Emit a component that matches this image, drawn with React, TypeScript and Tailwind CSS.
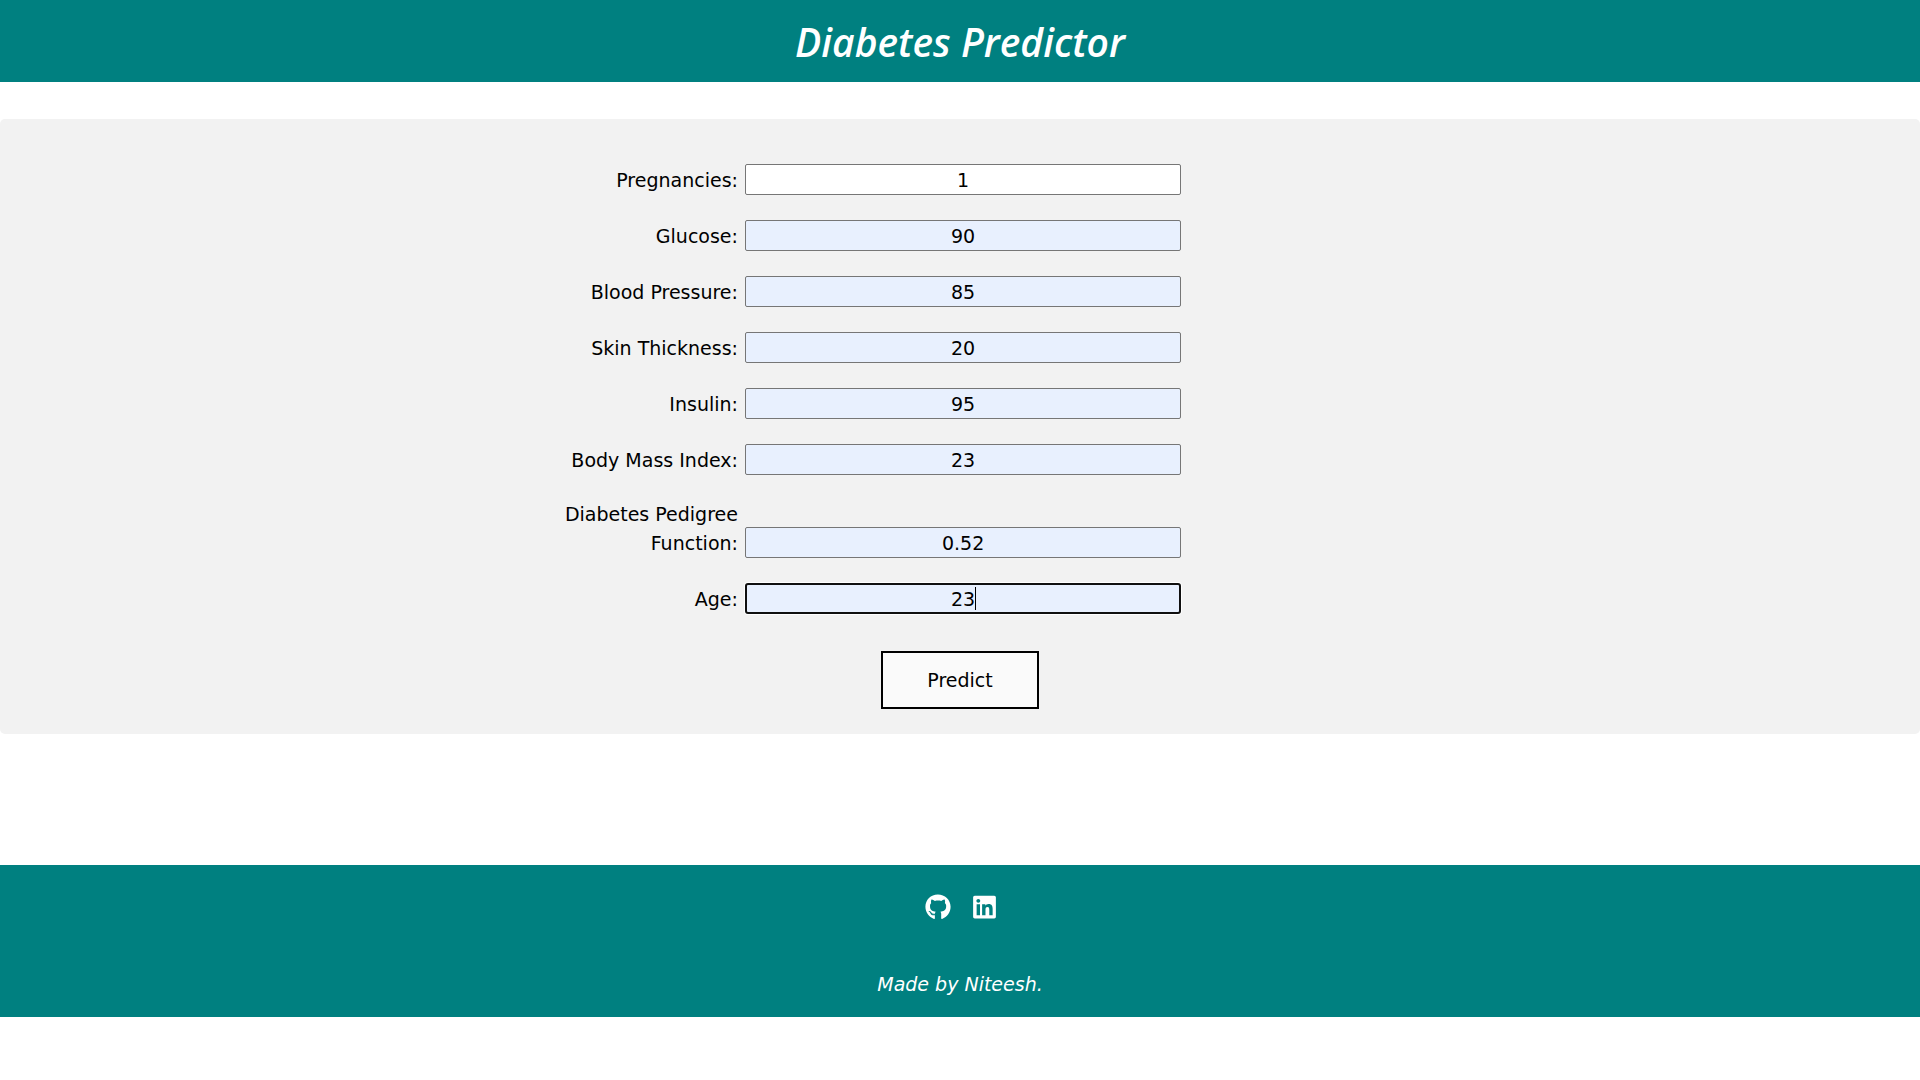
import React from "react";

type Field = { id: string; label: string; value: string; filled: boolean; active?: boolean };

const fields: Field[] = [
  { id: "pregnancies", label: "Pregnancies:", value: "1", filled: false },
  { id: "glucose", label: "Glucose:", value: "90", filled: true },
  { id: "blood-pressure", label: "Blood Pressure:", value: "85", filled: true },
  { id: "skin-thickness", label: "Skin Thickness:", value: "20", filled: true },
  { id: "insulin", label: "Insulin:", value: "95", filled: true },
  { id: "bmi", label: "Body Mass Index:", value: "23", filled: true },
  { id: "pedigree", label: "Diabetes Pedigree Function:", value: "0.52", filled: true },
  { id: "age", label: "Age:", value: "23", filled: true, active: true },
];

function FieldRow({ field }: { field: Field }) {
  const border = field.active
    ? "border-2 border-[#101010] rounded-[3px] ring-1 ring-white"
    : "border border-[#767676] rounded-[2px]";
  return (
    <div className="flex items-end gap-[7px] pl-[27.4%]">
      <label htmlFor={field.id} className="w-[15.2%] text-right leading-[29px]">
        {field.label}
      </label>
      <div className="relative w-[31.3%]">
        <input
          id={field.id}
          type="text"
          defaultValue={field.value}
          className={`block h-[31px] w-full text-center text-black outline-none ${border} ${
            field.filled ? "bg-[#e8f0fe]" : "bg-white"
          }`}
        />
        {field.active && <span className="absolute left-1/2 top-1 ml-3 h-[23px] w-px bg-black" />}
      </div>
    </div>
  );
}

export default function App() {
  return (
    <div className="min-h-screen bg-white font-['Verdana','DejaVu_Sans',sans-serif] text-[19px] text-black">
      <header className="bg-[#008080] pb-[15px] pt-[17px] text-center text-white">
        <h1 className="font-['Comic_Sans_MS','Open_Sans',cursive] text-[39px] font-semibold italic leading-[50px]">
          Diabetes Predictor
        </h1>
      </header>

      <main className="mt-[37px] rounded-[5px] bg-[#f2f2f2] pb-[25px] pt-[45px]">
        <form onSubmit={(e) => e.preventDefault()}>
          <div className="flex flex-col gap-[25px]">
            {fields.map((f) => (
              <FieldRow key={f.id} field={f} />
            ))}
          </div>
          <div className="mt-[37px] flex justify-center">
            <button type="submit" className="h-[58px] border-2 border-black bg-[#fafafa] px-11">
              Predict
            </button>
          </div>
        </form>
      </main>

      <footer className="mt-[131px] bg-[#008080] pb-[18px] pt-[29px] text-center text-white">
        <nav className="flex justify-center gap-[22px]">
          <a href="#github" aria-label="GitHub">
            <svg className="size-[26px]" viewBox="0 0 496 512" fill="currentColor">
              <path d="M165.9 397.4c0 2-2.3 3.6-5.2 3.6-3.3.3-5.6-1.3-5.6-3.6 0-2 2.3-3.6 5.2-3.6 3-.3 5.6 1.3 5.6 3.6zm-31.1-4.5c-.7 2 1.3 4.3 4.3 4.9 2.6 1 5.6 0 6.2-2s-1.3-4.3-4.3-5.2c-2.6-.7-5.5.3-6.2 2.3zm44.2-1.7c-2.9.7-4.9 2.6-4.6 4.9.3 2 2.9 3.3 5.9 2.6 2.9-.7 4.9-2.6 4.6-4.6-.3-1.9-3-3.2-5.9-2.9zM244.8 8C106.1 8 0 113.3 0 252c0 110.9 69.8 205.8 169.5 239.2 12.8 2.3 17.3-5.6 17.3-12.1 0-6.2-.3-40.4-.3-61.4 0 0-70 15-84.7-29.8 0 0-11.4-29.1-27.8-36.6 0 0-22.9-15.7 1.6-15.4 0 0 24.9 2 38.6 25.8 21.9 38.6 58.6 27.5 72.9 20.9 2.3-16 8.8-27.1 16-33.7-55.9-6.2-112.3-14.3-112.3-110.5 0-27.5 7.6-41.3 23.6-58.9-2.6-6.5-11.1-33.3 2.6-67.9 20.9-6.5 69 27 69 27 20-5.6 41.5-8.5 62.8-8.5s42.8 2.9 62.8 8.5c0 0 48.1-33.6 69-27 13.7 34.7 5.2 61.4 2.6 67.9 16 17.7 25.8 31.5 25.8 58.9 0 96.5-58.9 104.2-114.8 110.5 9.2 7.9 17 22.9 17 46.4 0 33.7-.3 75.4-.3 83.6 0 6.5 4.6 14.4 17.3 12.1C428.2 457.8 496 362.9 496 252 496 113.3 383.5 8 244.8 8z" />
            </svg>
          </a>
          <a href="#linkedin" aria-label="LinkedIn">
            <svg className="h-[26px] w-[23px]" viewBox="0 0 448 512" fill="currentColor">
              <path d="M416 32H31.900C14.300 32 0 46.500 0 64.300v383.400C0 465.500 14.300 480 31.900 480H416c17.600 0 32-14.500 32-32.300V64.300c0-17.800-14.400-32.300-32-32.300zM135.400 416H69V202.200h66.500V416zm-33.200-243c-21.300 0-38.500-17.300-38.500-38.500S80.900 96 102.200 96c21.200 0 38.500 17.300 38.500 38.500 0 21.300-17.200 38.500-38.500 38.500zm282.100 243h-66.400V312c0-24.800-.5-56.700-34.500-56.700-34.600 0-39.900 27-39.900 54.900V416h-66.400V202.200h63.700v29.200h.9c8.900-16.800 30.600-34.500 62.900-34.500 67.200 0 79.700 44.300 79.700 101.900V416z" />
            </svg>
          </a>
        </nav>
        <p className="mt-[50px] italic leading-[29px]">Made by Niteesh.</p>
      </footer>
    </div>
  );
}
